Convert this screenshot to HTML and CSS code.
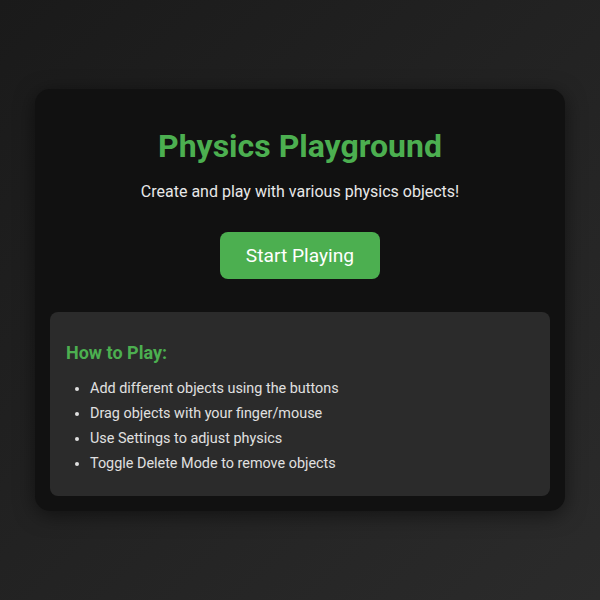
FILE: index.html
```html
<!DOCTYPE html>
<html>
<head>
<meta charset="utf-8">
<link rel="stylesheet" href="styles.css">
</head>
<body>
<div class="card">
  <h1 class="title">Physics Playground</h1>
  <p class="subtitle">Create and play with various physics objects!</p>
  <button class="start">Start Playing</button>
  <div class="howto">
    <h3 class="howto-title">How to Play:</h3>
    <ul class="howto-list">
      <li>Add different objects using the buttons</li>
      <li>Drag objects with your finger/mouse</li>
      <li>Use Settings to adjust physics</li>
      <li>Toggle Delete Mode to remove objects</li>
    </ul>
  </div>
</div>
</body>
</html>
```
FILE: styles.css
```css
html, body {
  margin: 0;
  height: 100%;
}
body {
  background: linear-gradient(135deg, #1a1a1a 0%, #2b2b2b 100%);
  font-family: Roboto, "Noto Sans", sans-serif;
  display: flex;
  align-items: center;
  justify-content: center;
  color: #e0e0e0;
}
.card {
  width: 500px;
  padding: 15px;
  background: #111111;
  border-radius: 15px;
  box-shadow: 0 4px 20px rgba(0, 0, 0, 0.5);
  display: flex;
  flex-direction: column;
  align-items: center;
  text-align: center;
}
.title {
  margin: 23px 0 0;
  font-size: 32px;
  line-height: 1.2;
  font-weight: 700;
  color: #4caf50;
}
.subtitle {
  margin: 16px 0 0;
  font-size: 16px;
  line-height: 1.2;
  color: #e8e8e8;
}
.start {
  margin-top: 31px;
  padding: 12px 26px;
  font-family: inherit;
  font-size: 19.2px;
  line-height: 1.2;
  color: #ffffff;
  background: #4caf50;
  border: none;
  border-radius: 8px;
}
.howto {
  align-self: stretch;
  margin-top: 33px;
  background: #2b2b2b;
  border-radius: 8px;
  padding: 30px 16px 20px;
  text-align: left;
}
.howto-title {
  margin: 0 0 12px;
  font-size: 18px;
  line-height: 1.2;
  font-weight: 700;
  color: #4caf50;
}
.howto-list {
  margin: 0;
  padding-left: 24px;
  font-size: 14.4px;
  line-height: 25px;
  color: #e0e0e0;
}
```
